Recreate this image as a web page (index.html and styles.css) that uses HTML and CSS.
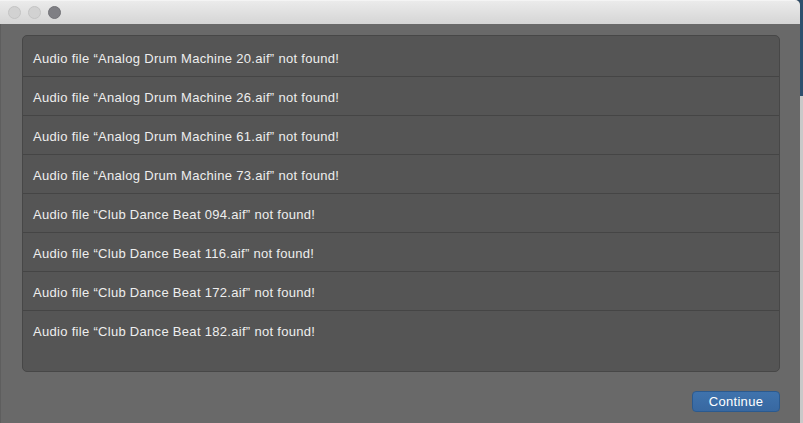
FILE: index.html
```html
<!DOCTYPE html>
<html>
<head>
<meta charset="utf-8">
<link rel="stylesheet" href="styles.css">
</head>
<body>
<div class="screen">
  <div class="window">
    <div class="titlebar">
      <span class="light"></span>
      <span class="light"></span>
      <span class="light dark"></span>
    </div>
    <div class="content">
      <div class="panel">
        <div class="row">Audio file “Analog Drum Machine 20.aif” not found!</div>
        <div class="row">Audio file “Analog Drum Machine 26.aif” not found!</div>
        <div class="row">Audio file “Analog Drum Machine 61.aif” not found!</div>
        <div class="row">Audio file “Analog Drum Machine 73.aif” not found!</div>
        <div class="row">Audio file “Club Dance Beat 094.aif” not found!</div>
        <div class="row">Audio file “Club Dance Beat 116.aif” not found!</div>
        <div class="row">Audio file “Club Dance Beat 172.aif” not found!</div>
        <div class="row last">Audio file “Club Dance Beat 182.aif” not found!</div>
      </div>
      <div class="footer">
        <button class="btn">Continue</button>
      </div>
    </div>
  </div>
  <div class="desktop">
    <div class="desk-top"></div>
    <div class="desk-bottom"></div>
  </div>
</div>
</body>
</html>
```

FILE: styles.css
```css
* { box-sizing: border-box; }
html, body { margin: 0; padding: 0; }
body {
  width: 803px;
  height: 423px;
  overflow: hidden;
  background: #2c4a66;
  font-family: "Liberation Sans", Arial, sans-serif;
}
.screen {
  display: flex;
  width: 803px;
  height: 423px;
}
.window {
  width: 800px;
  height: 423px;
  display: flex;
  flex-direction: column;
  border-top-right-radius: 5px;
  overflow: hidden;
  background: #696969;
}
.titlebar {
  height: 24px;
  flex: none;
  background: linear-gradient(#ebebeb, #d5d5d5);
  border-top: 1px solid #f4f4f4;
  display: flex;
  align-items: center;
  gap: 7px;
  padding-left: 8px;
}
.light {
  width: 13px;
  height: 13px;
  border-radius: 50%;
  background: #d2d2d2;
  border: 1px solid #c4c4c4;
}
.light.dark {
  background: #7f7f84;
  border-color: #727277;
}
.content {
  flex: 1;
  display: flex;
  flex-direction: column;
  padding: 11px 20px 11px 21px;
  background: #696969;
  border-left: 1px solid #5e5e5e;
}
.panel {
  height: 337px;
  background: #555555;
  border: 1px solid #474747;
  border-radius: 5px;
  padding-top: 2px;
}
.row {
  height: 39px;
  line-height: 41px;
  border-bottom: 1px solid #454545;
  padding-left: 10px;
  color: #eeeeee;
  font-size: 13px;
  letter-spacing: 0.3px;
}
.row.last { border-bottom: none; }
.footer {
  display: flex;
  justify-content: flex-end;
  padding-top: 19px;
}
.btn {
  width: 88px;
  height: 21px;
  margin: 0;
  padding: 0;
  border: 1px solid #2b5a8f;
  border-radius: 4px;
  background: linear-gradient(#3f73ad, #3868a1);
  color: #ffffff;
  font-family: "Liberation Sans", Arial, sans-serif;
  font-size: 13px;
  letter-spacing: 0.3px;
  line-height: 19px;
}
.desktop {
  width: 3px;
  display: flex;
  flex-direction: column;
}
.desk-top { height: 96px; background: #2d4f6e; }
.desk-bottom { flex: 1; background: #c9c9c9; }
```
